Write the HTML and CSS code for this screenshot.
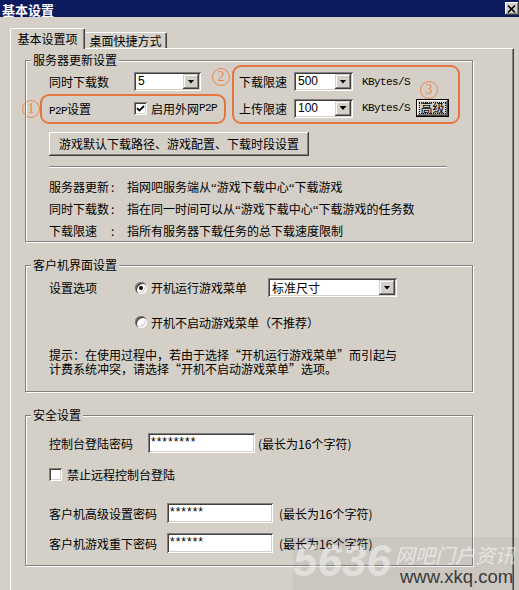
FILE: index.html
```html
<!DOCTYPE html>
<html lang="zh-CN">
<head>
    <meta charset="UTF-8">
    <title>基本设置</title>
    <link rel="stylesheet" href="styles.css">
</head>
<body>
<div class="window">
    <div class="titlebar">
        <span class="title">基本设置</span>
        <span class="close"><svg width="12" height="10" viewBox="0 0 12 10"><path d="M2 1.5L9 8.5M9 1.5L2 8.5" stroke="#000" stroke-width="1.6"/></svg></span>
    </div>

    <div class="tabs">
        <div class="tab tab-active">基本设置项</div>
        <div class="tab tab-2">桌面快捷方式</div>
    </div>

    <div class="panel">
        <!-- 服务器更新设置 -->
        <fieldset class="group">
            <legend>服务器更新设置</legend>
            <div class="body body-server">
                <div class="grid">
                    <span>同时下载数</span>
                    <div class="combo w67"><span class="val">5</span><span class="drop"></span></div>
                    <span>下载限速</span>
                    <div class="combo w59"><span class="val">500</span><span class="drop"></span></div>
                    <span class="unit">KBytes/S</span>
                    <span></span>

                    <span><span class="latin">P2P</span>设置</span>
                    <label class="check"><span class="box"><svg width="9" height="9" viewBox="0 0 9 9"><path d="M1 4.2L3.4 6.6L8 2" fill="none" stroke="#000" stroke-width="1.8"/></svg></span>启用外网<span class="latin">P2P</span></label>
                    <span>上传限速</span>
                    <div class="combo w59"><span class="val">100</span><span class="drop"></span></div>
                    <span class="unit">KBytes/S</span>
                    <button class="btn btn-default"><span class="focus">高级</span></button>
                </div>

                <button class="btn btn-wide">游戏默认下载路径、游戏配置、下载时段设置</button>

                <div class="sep"></div>

                <div class="desc">
                    <span>服务器更新</span><span>:</span><span>指网吧服务端从<span class="q">“</span>游戏下载中心<span class="q">“</span>下载游戏</span>
                    <span>同时下载数</span><span>:</span><span>指在同一时间可以从<span class="q">“</span>游戏下载中心<span class="q">“</span>下载游戏的任务数</span>
                    <span>下载限速</span><span>:</span><span>指所有服务器下载任务的总下载速度限制</span>
                </div>
            </div>
        </fieldset>

        <!-- 客户机界面设置 -->
        <fieldset class="group group-next">
            <legend>客户机界面设置</legend>
            <div class="body body-client">
                <div class="row">
                    <span class="lbl w86">设置选项</span>
                    <label class="opt w133"><span class="radio on"></span>开机运行游戏菜单</label>
                    <div class="combo w129"><span class="val val-cn">标准尺寸</span><span class="drop"></span></div>
                </div>
                <div class="row row-radio2">
                    <label class="opt"><span class="radio"></span>开机不启动游戏菜单（不推荐）</label>
                </div>
                <p class="hint">提示：在使用过程中，若由于选择“开机运行游戏菜单”而引起与<br>计费系统冲突，请选择“开机不启动游戏菜单”选项。</p>
            </div>
        </fieldset>

        <!-- 安全设置 -->
        <fieldset class="group group-next">
            <legend>安全设置</legend>
            <div class="body body-safe">
                <div class="row row-edit">
                    <span class="lbl w99">控制台登陆密码</span>
                    <div class="edit w107">********</div>
                    <span class="note">(最长为16个字符)</span>
                </div>
                <div class="row row-check">
                    <label class="check"><span class="box"></span>禁止远程控制台登陆</label>
                </div>
                <div class="row row-edit row-gap20">
                    <span class="lbl w118">客户机高级设置密码</span>
                    <div class="edit w106">******</div>
                    <span class="note note-far">(最长为16个字符)</span>
                </div>
                <div class="row row-edit row-gap10">
                    <span class="lbl w118">客户机游戏重下密码</span>
                    <div class="edit w106">******</div>
                    <span class="note note-far">(最长为16个字符)</span>
                </div>
            </div>
        </fieldset>
    </div>

    <!-- 标注 -->
    <div class="mark mark-p2p"></div>
    <div class="mark mark-speed"></div>
    <span class="num num-1">1</span>
    <span class="num num-2">2</span>
    <span class="num num-3">3</span>

    <div class="watermark">
        <span class="wm-num">5636</span>
        <span class="wm-cn">网吧门户资讯</span>
        <span class="wm-url">www.xkq.com</span>
    </div>
</div>
</body>
</html>
```

FILE: styles.css
```css
* {
    box-sizing: border-box;
}
body {
    margin: 0;
    background: #d4d0c8;
    font-family: "Noto Sans CJK SC", sans-serif;
    font-size: 12px;
    color: #000;
}
.window {
    position: relative;
    width: 519px;
    height: 590px;
    overflow: hidden;
    background: #d4d0c8;
}

/* title bar */
.titlebar {
    height: 17px;
    background: #0b1b5e;
    display: flex;
    justify-content: space-between;
    align-items: flex-start;
}
.title {
    color: #fff;
    font-weight: bold;
    font-size: 13px;
    line-height: 15px;
    padding: 2px 0 0 2px;
}
.close {
    width: 14px;
    height: 13px;
    margin-top: 2px;
    background: #d4d0c8;
    display: flex;
    align-items: center;
    justify-content: center;
    box-shadow: inset -1px -1px #404040, inset 1px 1px #fff, inset -2px -2px #808080;
}

/* tabs */
.tabs {
    display: flex;
    align-items: flex-end;
    height: 31px;
    padding-left: 10px;
}
.tab {
    height: 16px;
    line-height: 14px;
    padding-top: 1px;
    text-align: center;
    border: 1px solid;
    border-color: #fff #404040 transparent #fff;
    border-bottom: 0;
    border-radius: 2px 2px 0 0;
    box-shadow: inset -1px 0 #808080;
    background: #d4d0c8;
}
.tab-active {
    width: 75px;
    height: 21px;
    padding-top: 3px;
    margin-bottom: -1px;
    position: relative;
    z-index: 1;
}
.tab-2 {
    width: 82px;
    border-left: 0;
}
.panel {
    margin-left: 10px;
    width: 504px;
    height: 560px;
    border-top: 1px solid #fff;
    border-left: 1px solid #fff;
    border-right: 1px solid #404040;
    box-shadow: inset -1px 0 #808080;
    padding: 4px 0 0 14px;
}

/* group boxes */
.group {
    margin: 0;
    padding: 0;
    min-width: 0;
    width: 448px;
    border: 1px solid #808080;
    box-shadow: inset 1px 1px #fff, 1px 1px #fff;
}
.group legend {
    margin-left: 5px;
    padding: 0 2px;
    line-height: 14px;
    background: #d4d0c8;
}
.group-next {
    margin-top: 16px;
}
.body {
    padding-left: 23px;
}
.body-server {
    padding-top: 5px;
}
.body-client {
    padding-top: 6px;
    padding-bottom: 15px;
}
.body-safe {
    padding-top: 11px;
    padding-bottom: 12px;
}

.grid {
    display: grid;
    grid-template-columns: 85px 105px 55px 68px 54px auto;
    grid-template-rows: 19px 18px;
    row-gap: 8px;
    align-items: center;
}
.latin, .unit {
    font-family: "Liberation Mono", monospace;
    font-size: 11px;
    letter-spacing: -0.6px;
}

/* controls */
.combo {
    display: flex;
    height: 19px;
    padding: 2px;
    background: #fff;
    box-shadow: inset 1px 1px #808080, inset -1px -1px #fff, inset 2px 2px #404040, inset -2px -2px #d4d0c8;
}
.w67 { width: 67px; }
.w59 { width: 59px; }
.w129 { width: 129px; }
.val {
    flex: 1;
    padding-left: 2px;
    font-family: "Liberation Sans", sans-serif;
    line-height: 15px;
}
.val-cn {
    font-family: "Noto Sans CJK SC", sans-serif;
}
.drop {
    width: 16px;
    display: flex;
    align-items: center;
    justify-content: center;
    background: #d4d0c8;
    box-shadow: inset -1px -1px #404040, inset 1px 1px #d4d0c8, inset -2px -2px #808080, inset 2px 2px #fff;
}
.drop::after {
    content: "";
    width: 7px;
    height: 4px;
    background: #000;
    clip-path: polygon(0 0, 100% 0, 50% 100%);
}
.check, .opt {
    display: flex;
    align-items: center;
}
.box {
    width: 13px;
    height: 13px;
    margin-right: 5px;
    background: #fff;
    display: flex;
    align-items: center;
    justify-content: center;
    box-shadow: inset 1px 1px #808080, inset -1px -1px #fff, inset 2px 2px #404040, inset -2px -2px #d4d0c8;
}
.grid .box {
    margin-right: 4px;
}
.radio {
    width: 12px;
    height: 12px;
    margin-right: 4px;
    border-radius: 50%;
    background: #fff;
    display: flex;
    align-items: center;
    justify-content: center;
    box-shadow: inset 1px 1px #808080, inset 2px 2px #404040, inset -1px -1px #fff, inset -2px -2px #d4d0c8;
}
.radio.on::after {
    content: "";
    width: 4px;
    height: 4px;
    border-radius: 50%;
    background: #000;
}
.btn {
    border: 0;
    padding: 0;
    margin: 0;
    font: inherit;
    color: #000;
    background: #d4d0c8;
    box-shadow: inset -1px -1px #404040, inset 1px 1px #fff, inset -2px -2px #808080, inset 2px 2px #d4d0c8;
}
.btn-default {
    width: 33px;
    height: 18px;
    border: 1px solid #000;
    padding: 3px;
    display: flex;
}
.focus {
    flex: 1;
    line-height: 10px;
    outline: 1px dotted #000;
}
.btn-wide {
    display: block;
    width: 260px;
    height: 24px;
    margin-top: 15px;
    line-height: 24px;
}
.sep {
    width: 398px;
    margin-top: 10px;
    border-top: 1px solid #808080;
    border-bottom: 1px solid #fff;
}
.desc {
    display: grid;
    grid-template-columns: 62px 16px auto;
    margin-top: 8px;
    line-height: 21px;
}
.q {
    font-family: "Liberation Serif", serif;
    font-size: 13px;
}

.row {
    display: flex;
    align-items: center;
    height: 19px;
}
.lbl { flex: none; }
.w86 { width: 86px; }
.w99 { width: 99px; }
.w118 { width: 118px; }
.w133 { width: 133px; }
.row-radio2 {
    height: 18px;
    margin-top: 16px;
    padding-left: 86px;
}
.hint {
    margin: 17px 0 0;
    line-height: 14px;
    white-space: nowrap;
}
.row-edit {
    height: 20px;
}
.row-check {
    height: 18px;
    margin-top: 12px;
}
.row-gap20 { margin-top: 20px; }
.row-gap10 { margin-top: 10px; }
.edit {
    height: 20px;
    padding: 2px 0 0 3px;
    background: #fff;
    font-family: "Liberation Sans", sans-serif;
    letter-spacing: 1px;
    line-height: 14px;
    box-shadow: inset 1px 1px #808080, inset -1px -1px #fff, inset 2px 2px #404040, inset -2px -2px #d4d0c8;
}
.w107 { width: 107px; }
.w106 { width: 106px; }
.note {
    margin-left: 3px;
}
.note-far {
    margin-left: 6px;
}

/* orange annotations */
.mark {
    position: absolute;
    border: 2px solid #e5763f;
    border-radius: 9px;
}
.mark-p2p {
    left: 40px;
    top: 94px;
    width: 186px;
    height: 30px;
}
.mark-speed {
    left: 232px;
    top: 65px;
    width: 228px;
    height: 59px;
}
.num {
    position: absolute;
    width: 18px;
    height: 18px;
    border: 1.5px solid #ec8652;
    border-radius: 50%;
    color: #ec8652;
    font-family: "Liberation Serif", serif;
    font-size: 14px;
    line-height: 15px;
    text-align: center;
}
.num-1 { left: 22px; top: 100px; }
.num-2 { left: 212px; top: 68px; }
.num-3 { left: 420px; top: 81px; }

/* watermark */
.watermark {
    position: absolute;
    left: 293px;
    top: 537px;
    width: 226px;
    height: 53px;
    background: rgba(100, 100, 100, 0.08);
}
.wm-num {
    position: absolute;
    left: 0;
    top: 5px;
    font-family: "Liberation Sans", sans-serif;
    font-size: 44px;
    font-weight: bold;
    font-style: italic;
    line-height: 38px;
    color: rgba(255, 255, 255, 0.45);
}
.wm-cn {
    position: absolute;
    left: 102px;
    top: 8px;
    font-size: 20px;
    font-style: italic;
    line-height: 20px;
    color: rgba(255, 255, 255, 0.55);
}
.wm-url {
    position: absolute;
    left: 107px;
    top: 30px;
    font-family: "Liberation Sans", sans-serif;
    font-size: 18.5px;
    line-height: 20px;
    color: #3a3a3a;
}
```
